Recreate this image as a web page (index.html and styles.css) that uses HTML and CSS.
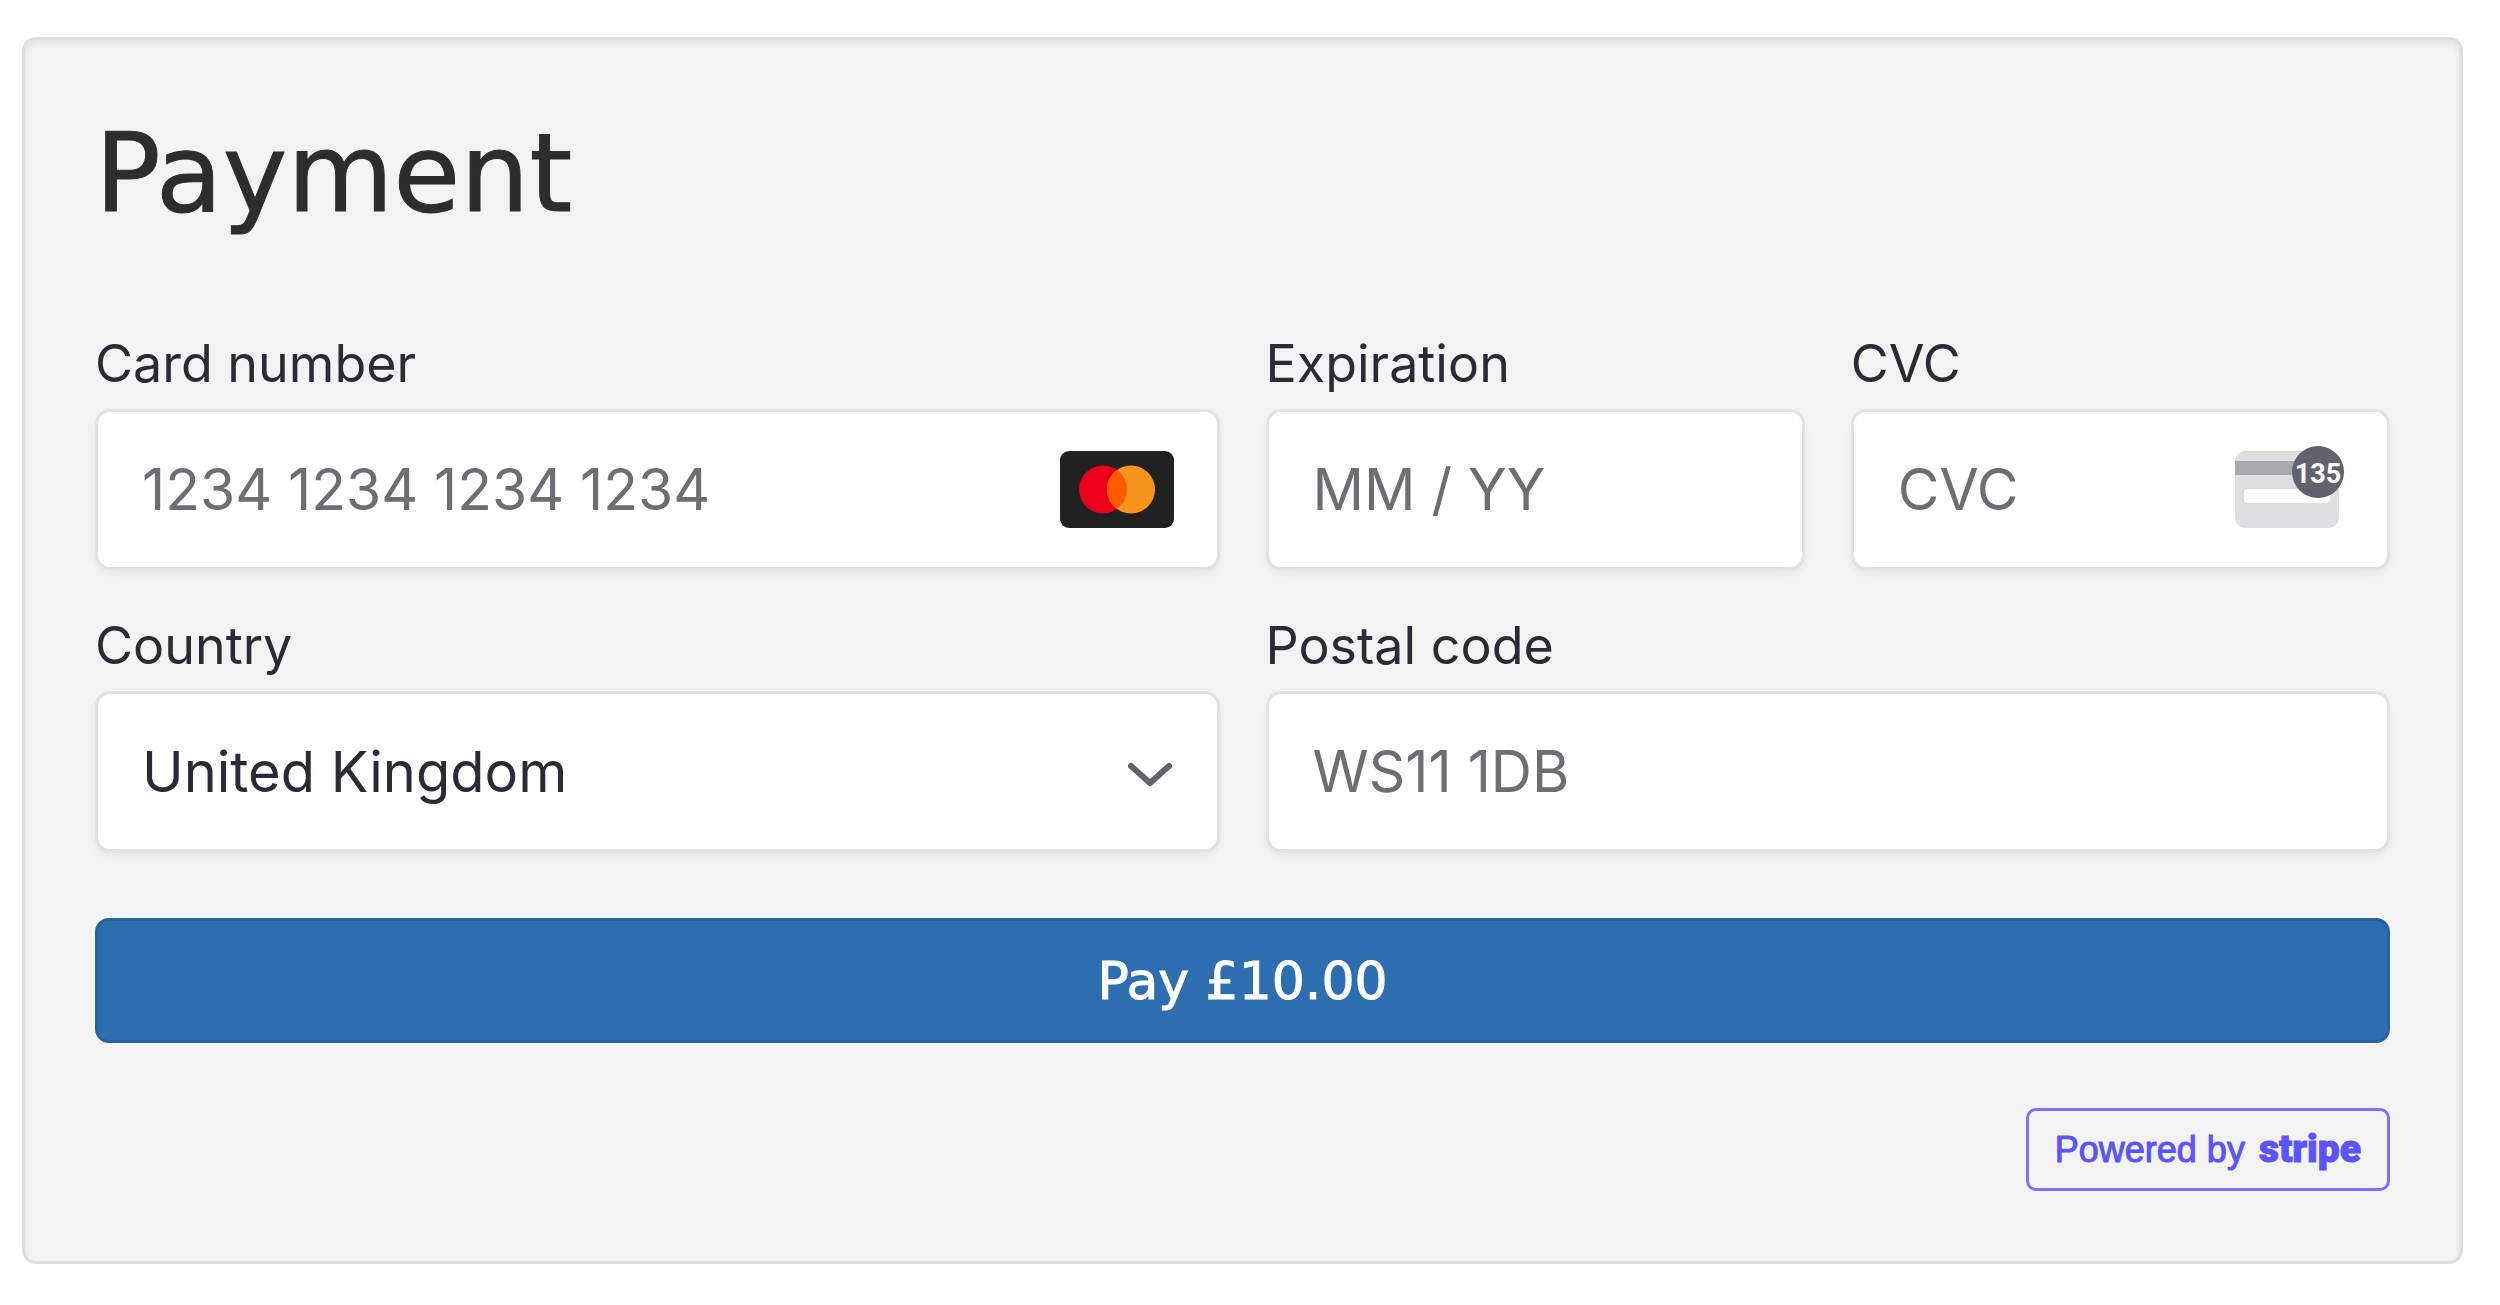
FILE: index.html
```html
<!DOCTYPE html>
<html lang="en">

<head>
	<meta charset="utf-8" />
	<meta name="viewport" content="width=device-width, initial-scale=1">
	<title>Payment</title>
	<link rel="stylesheet" href="styles.css">
</head>

<body>
	<main class="panel">
		<h1>Payment</h1>
		<form action="#" method="post">
			<div class="fields">
				<div class="field wide">
					<label for="number">Card number</label>
					<div class="control">
						<input id="number" type="text" inputmode="numeric" autocomplete="cc-number" placeholder="1234 1234 1234 1234">
						<svg class="icon brand" viewBox="0 0 114 77" aria-hidden="true">
							<rect width="114" height="77" rx="9" fill="#212121" />
							<circle cx="43" cy="38.5" r="24" fill="#eb001b" />
							<circle cx="71" cy="38.5" r="24" fill="#f7941d" />
							<path d="M57 19a24 24 0 0 1 0 39a24 24 0 0 1 0-39z" fill="#ff5a00" />
						</svg>
					</div>
				</div>
				<div class="field">
					<label for="expiry">Expiration</label>
					<div class="control">
						<input id="expiry" type="text" inputmode="numeric" autocomplete="cc-exp" placeholder="MM / YY">
					</div>
				</div>
				<div class="field">
					<label for="cvc">CVC</label>
					<div class="control">
						<input id="cvc" type="text" inputmode="numeric" autocomplete="cc-csc" placeholder="CVC">
						<svg class="icon code" viewBox="0 0 114 87" aria-hidden="true">
							<rect x="3" y="5" width="104" height="77" rx="10" fill="#dfdfe1" />
							<rect x="3" y="15" width="104" height="14" fill="#a9aaaf" />
							<rect x="12" y="43" width="86" height="14" rx="4" fill="#fff" />
							<circle cx="86" cy="26" r="26" fill="#62626d" />
							<text x="86" y="37" text-anchor="middle">135</text>
						</svg>
					</div>
				</div>
				<div class="field wide">
					<label for="country">Country</label>
					<div class="control">
						<select id="country" autocomplete="country">
							<option>United Kingdom</option>
						</select>
						<svg class="icon chevron" viewBox="0 0 44 26" aria-hidden="true">
							<path d="M3 4l19 17L41 4" fill="none" stroke="#62626d" stroke-width="6" stroke-linecap="round" stroke-linejoin="round" />
						</svg>
					</div>
				</div>
				<div class="field wide">
					<label for="postal">Postal code</label>
					<div class="control">
						<input id="postal" type="text" autocomplete="postal-code" placeholder="WS11 1DB">
					</div>
				</div>
			</div>
			<button type="submit">Pay £10.00</button>
		</form>
		<footer>
			<a class="poweredby" href="https://stripe.com">Powered by <strong>stripe</strong></a>
		</footer>
	</main>
</body>

</html>
```
FILE: styles.css
```css
* {
	box-sizing: border-box;
}

body {
	margin: 37px 37px 42px 22px;
	background-color: #fff;
	font-family: Inter, "Liberation Sans", sans-serif;
	color: #2b2b37;
}

.panel {
	padding: 70px;
	border: 3px solid #dedede;
	border-radius: 14px;
	background-color: #f3f3f3;
	box-shadow: inset 0 4px 6px rgba(0, 0, 0, .07);
}

h1 {
	margin: 0 0 94px;
	font: 400 109px/128px "DejaVu Sans", sans-serif;
	color: #2d2d2d;
	-webkit-text-stroke: 1px;
}

.fields {
	display: grid;
	grid-template-columns: repeat(4, 1fr);
	gap: 44px 46px;
}

.field {
	min-width: 0;
}

.wide {
	grid-column: span 2;
}

label {
	display: block;
	margin-bottom: 13px;
	font-size: 52px;
	line-height: 64px;
}

.control {
	position: relative;
}

input,
select {
	display: block;
	width: 100%;
	height: 161px;
	padding: 0 44px;
	border: 3px solid #e2e2e2;
	border-radius: 15px;
	background-color: #fff;
	box-shadow: 0 3px 4px rgba(0, 0, 0, .04), 0 9px 18px rgba(0, 0, 0, .02);
	font: 400 57px/68px Inter, "Liberation Sans", sans-serif;
	color: #2b2b37;
	appearance: none;
}

select {
	font-size: 56px;
}

input::placeholder {
	color: #6d6e74;
	opacity: 1;
}

.icon {
	position: absolute;
	top: 0;
	bottom: 0;
	right: 46px;
	margin: auto 0;
	pointer-events: none;
}

.brand {
	width: 114px;
	height: 77px;
}

.code {
	right: 44px;
	width: 114px;
	height: 87px;
}

.code text {
	font: 700 27px Roboto, sans-serif;
	fill: #fff;
}

.chevron {
	top: 6px;
	right: 48px;
	width: 44px;
	height: 26px;
}

button {
	display: block;
	width: 100%;
	height: 125px;
	margin-top: 66px;
	border: 3px solid #28639c;
	border-radius: 14px;
	background-color: #2c6eaf;
	font: 400 52px/64px "DejaVu Sans", sans-serif;
	color: #fff;
	-webkit-text-stroke: 1px;
	cursor: pointer;
}

footer {
	display: flex;
	justify-content: flex-end;
	margin-top: 65px;
}

.poweredby {
	display: flex;
	align-items: baseline;
	gap: 14px;
	padding: 14px 26px;
	border: 3px solid #7a73ff;
	border-radius: 10px;
	font-family: "Liberation Sans", Arial, sans-serif;
	font-size: 36px;
	line-height: 48px;
	color: #5b53ff;
	text-decoration: none;
	-webkit-text-stroke: 1px;
}

.poweredby strong {
	font: 900 39px/48px Roboto, sans-serif;
}
```
